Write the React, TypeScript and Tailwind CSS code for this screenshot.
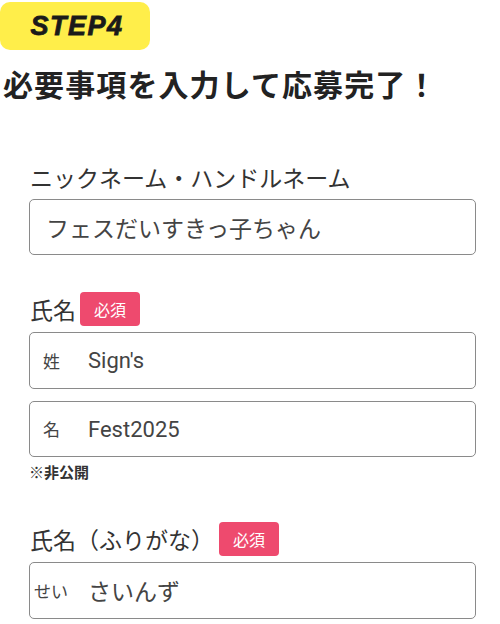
const jp = { fontFamily: '"Noto Sans CJK JP", "Noto Sans", sans-serif' }
const latin = { fontFamily: 'Roboto, "Noto Sans CJK JP", sans-serif' }

function Required() {
  return (
    <span className="inline-flex items-center justify-center w-[60px] h-[34px] rounded-[4px] bg-[#EE4A6E] text-white text-[16px] leading-none">
      必須
    </span>
  )
}

function Field({
  prefix,
  value,
  prefixClass,
  valueClass,
  className,
  latinValue,
}: {
  prefix?: string
  value: string
  prefixClass?: string
  valueClass?: string
  className?: string
  latinValue?: boolean
}) {
  return (
    <div
      className={`flex items-center border-[1.5px] border-[#8a8a8a] rounded-[5px] bg-white ${className || ''}`}
    >
      {prefix && <span className={prefixClass}>{prefix}</span>}
      <span className={valueClass} style={latinValue ? latin : undefined}>
        {value}
      </span>
    </div>
  )
}

export default function App() {
  return (
    <div className="w-[500px] h-[624px] bg-white overflow-hidden text-[#333]" style={jp}>
      <div className="mt-[2px] w-[150px] h-[48px] rounded-[10px] bg-[#FFEE4A] flex items-center justify-center">
        <span
          className="text-[27px] font-bold italic text-[#1a1a1a] tracking-[1.5px] ml-[4px] [-webkit-text-stroke:0.8px_#1a1a1a]"
          style={{ fontFamily: '"Liberation Sans", Arial, sans-serif' }}
        >
          STEP4
        </span>
      </div>

      <h1 className="mt-[17px] ml-[3px] text-[30px] leading-[32px] font-bold tracking-[1.1px] text-[#222]">
        必要事項を入力して応募完了！
      </h1>

      <div className="pl-[29px] pr-[24px] mt-[63px]">
        <p className="text-[23px] leading-[30px] ml-[1px]">
          ニックネーム・ハンドルネーム
        </p>

        <Field
          className="mt-[7px] h-[56px] pl-[16px]"
          value="フェスだいすきっ子ちゃん"
          valueClass="text-[23px] text-[#444]"
        />

        <div className="mt-[37px] flex items-center gap-[4px] h-[34px]">
          <span className="text-[23px] ml-[1px]">氏名</span>
          <Required />
        </div>

        <Field
          className="mt-[6px] h-[57px] pl-[13px]"
          prefix="姓"
          prefixClass="w-[45px] text-[17px] text-[#444]"
          value="Sign's"
          valueClass="text-[22px] text-[#444]"
          latinValue
        />

        <Field
          className="mt-[12px] h-[56px] pl-[13px]"
          prefix="名"
          prefixClass="w-[45px] text-[17px] text-[#444]"
          value="Fest2025"
          valueClass="text-[22px] text-[#444]"
          latinValue
        />

        <p className="mt-[5px] text-[15px] leading-[20px] font-bold text-[#333]">
          ※非公開
        </p>

        <div className="mt-[40px] flex items-center gap-[5px] h-[34px]">
          <span className="text-[23px] ml-[1px]">氏名（ふりがな）</span>
          <Required />
        </div>

        <Field
          className="mt-[6px] h-[57px] pl-[4px]"
          prefix="せい"
          prefixClass="w-[54px] text-[17px] text-[#444]"
          value="さいんず"
          valueClass="text-[23px] text-[#444]"
        />
      </div>
    </div>
  )
}
